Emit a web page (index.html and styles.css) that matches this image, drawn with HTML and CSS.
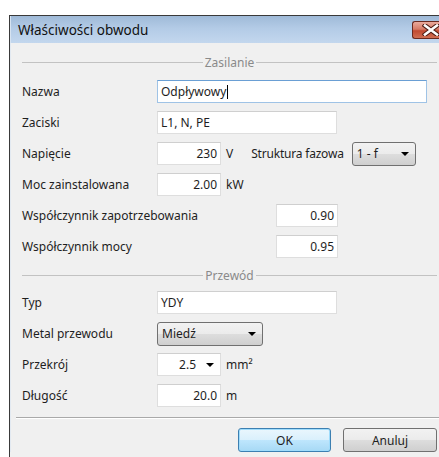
FILE: index.html
```html
<!DOCTYPE html>
<html lang="pl">
<head>
<meta charset="utf-8">
<title>Właściwości obwodu</title>
<link rel="stylesheet" href="styles.css">
</head>
<body>
<div class="window">
  <div class="titlebar">
    <span class="title">Właściwości obwodu</span>
    <div class="close">
      <svg width="18" height="12" viewBox="0 0 18 12">
        <path d="M3 1.5 L15 10.5 M15 1.5 L3 10.5" stroke="#4a1a12" stroke-width="4.6" stroke-linecap="square" fill="none"/>
        <path d="M3 1.5 L15 10.5 M15 1.5 L3 10.5" stroke="#fff" stroke-width="2.6" stroke-linecap="square" fill="none"/>
      </svg>
    </div>
  </div>

  <div class="body">
    <div class="group-head"><span class="rule"></span><span class="group-label">Zasilanie</span><span class="rule"></span></div>
    <div class="rows">
      <div class="row">
        <span class="lbl">Nazwa</span>
        <div class="field w-name focus">Odpływowy<span class="caret"></span></div>
      </div>
      <div class="row">
        <span class="lbl">Zaciski</span>
        <div class="field w-mid">L1, N, PE</div>
      </div>
      <div class="row">
        <span class="lbl">Napięcie</span>
        <div class="field w-num num">230</div>
        <span class="unit">V</span>
        <span class="sublbl">Struktura fazowa</span>
        <div class="combo w-phase">1 - f<span class="arrow"></span></div>
      </div>
      <div class="row">
        <span class="lbl">Moc zainstalowana</span>
        <div class="field w-num num">2.00</div>
        <span class="unit">kW</span>
      </div>
      <div class="row">
        <span class="lbl wide">Współczynnik zapotrzebowania</span>
        <div class="field w-coef num">0.90</div>
      </div>
      <div class="row">
        <span class="lbl wide">Współczynnik mocy</span>
        <div class="field w-coef num">0.95</div>
      </div>
    </div>

    <div class="group-head second"><span class="rule"></span><span class="group-label">Przewód</span><span class="rule"></span></div>
    <div class="rows">
      <div class="row">
        <span class="lbl">Typ</span>
        <div class="field w-mid">YDY</div>
      </div>
      <div class="row">
        <span class="lbl">Metal przewodu</span>
        <div class="combo w-metal">Miedź<span class="arrow"></span></div>
      </div>
      <div class="row">
        <span class="lbl">Przekrój</span>
        <div class="field w-num num drop">2.5<span class="arrow"></span></div>
        <span class="unit">mm²</span>
      </div>
      <div class="row">
        <span class="lbl">Długość</span>
        <div class="field w-num num">20.0</div>
        <span class="unit">m</span>
      </div>
    </div>

    <div class="separator"></div>

    <div class="buttons">
      <div class="btn default">OK</div>
      <div class="btn">Anuluj</div>
    </div>
  </div>
</div>
</body>
</html>
```

FILE: styles.css
```css
html, body {
  margin: 0;
  overflow: hidden;
  background: #fff;
}

body {
  font-family: "Noto Sans", "Liberation Sans", sans-serif;
  font-size: 12px;
  color: #1e1e1e;
}

/* dialog frame */
.window {
  margin: 15px 0 0 9px;
  width: 445px;
  height: 460px;
  border-top: 1px solid #3a3a3a;
  border-left: 1px solid #3a3a3a;
  background: #f0f0f0;
}

.titlebar {
  height: 27px;
  display: flex;
  align-items: center;
  padding-left: 8px;
  background: linear-gradient(#9fbad8, #b3cbe6 45%, #c3d7ee);
  box-shadow: inset 1px 0 #d6e3f1;
}

.title {
  font-size: 13.5px;
  color: #111;
  flex: 1;
}

.close {
  width: 43px;
  height: 18px;
  box-sizing: border-box;
  border: 1px solid #6b2a1f;
  border-right: none;
  border-radius: 3px 0 0 3px;
  background: linear-gradient(#e9aa9c, #d67a65 45%, #c14a31 55%, #cf6e52);
  display: flex;
  align-items: center;
  justify-content: center;
  padding-right: 6px;
}

.body {
  padding: 11px 18px 0 12px;
  box-shadow: inset 1px 0 #e2e9f1;
}

/* group header with rules on either side */
.group-head {
  display: flex;
  align-items: center;
  height: 16px;
  gap: 2px;
}

.group-head.second {
  margin-top: 9px;
}

.rule {
  flex: 1;
  height: 1px;
  background: #c2c2c2;
}

.group-label {
  color: #8a8a8a;
}

.rows {
  display: flex;
  flex-direction: column;
  gap: 8px;
  margin-top: 10px;
}

.group-head.second + .rows {
  margin-top: 8px;
}

.row {
  display: flex;
  align-items: center;
  height: 23px;
}

.lbl {
  width: 135px;
  flex: none;
}

.lbl.wide {
  width: 254px;
}

.field {
  height: 23px;
  box-sizing: border-box;
  border: 1px solid #dedede;
  border-top-color: #cfcfcf;
  background: #fff;
  padding: 0 3px;
  display: flex;
  align-items: center;
  white-space: nowrap;
}

.field.num {
  justify-content: flex-end;
}

.field.focus {
  border-color: #9fc3e6;
  border-top-color: #6a9fd4;
}

.caret {
  width: 1px;
  height: 14px;
  background: #000;
  margin-left: 1px;
}

.w-name { width: 270px; }
.w-mid { width: 180px; }
.w-num { width: 64px; }
.w-coef { width: 62px; }

.unit {
  margin-left: 5px;
}

.sublbl {
  margin-left: 18px;
  letter-spacing: -0.2px;
}

/* drop-down list */
.combo {
  height: 24px;
  box-sizing: border-box;
  border: 1px solid #707070;
  border-radius: 3px;
  background: linear-gradient(#f2f2f2, #ebebeb 50%, #dddddd 51%, #cfcfcf);
  display: flex;
  align-items: center;
  justify-content: space-between;
  padding: 0 6px 0 4px;
}

.w-phase {
  width: 64px;
  margin-left: 8px;
}

.w-metal {
  width: 106px;
}

.arrow {
  width: 0;
  height: 0;
  border-left: 4px solid transparent;
  border-right: 4px solid transparent;
  border-top: 4px solid #000;
}

.field.drop {
  padding-right: 6px;
}

.field.drop .arrow {
  margin-left: 10px;
}

.separator {
  margin: 10px -18px 0 -6px;
  height: 0;
  border-top: 1px solid #a9a9a9;
  border-bottom: 1px solid #fff;
}

.buttons {
  display: flex;
  justify-content: flex-end;
  gap: 12px;
  margin-top: 9px;
}

.btn {
  width: 94px;
  height: 24px;
  box-sizing: border-box;
  border: 1px solid #707070;
  border-radius: 3px;
  background: linear-gradient(#f2f2f2, #ebebeb 50%, #dddddd 51%, #cfcfcf);
  display: flex;
  align-items: center;
  justify-content: center;
}

.btn.default {
  width: 93px;
  border-color: #3c7fb1;
  background: linear-gradient(#eaf6fd, #d9f0fc 50%, #bee6fd 51%, #a7d9f5);
  box-shadow: inset 0 0 0 1px #9fdcfc;
}
```
